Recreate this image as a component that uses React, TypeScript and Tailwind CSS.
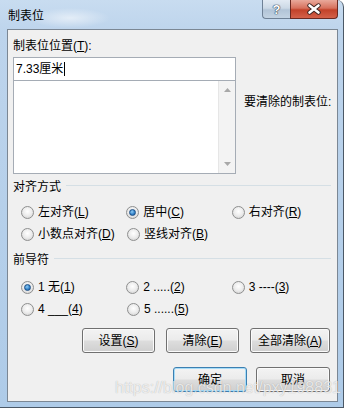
import React from "react";

const Radio = ({ checked }: { checked?: boolean }) => (
    <span className="flex h-[13px] w-[13px] shrink-0 items-center justify-center rounded-full border border-[#8e8f8f] bg-[radial-gradient(circle_at_50%_40%,#ffffff_0%,#ececec_50%,#cbcbcb_100%)]">
        {checked && (
            <span className="h-[7px] w-[7px] rounded-full border border-[#1c4f86] bg-[radial-gradient(circle_at_40%_35%,#8ecbf5_0%,#2f7fc6_60%,#1a5596_100%)]" />
        )}
    </span>
);

const Option = ({ label, keyChar, checked }: { label: string; keyChar: string; checked?: boolean }) => (
    <div className="flex h-[22px] w-[106px] items-center gap-[4px]">
        <Radio checked={checked} />
        <span className="whitespace-pre leading-[16px]">
            {label}(<u>{keyChar}</u>)
        </span>
    </div>
);

const Button = ({ label, keyChar, width, primary }: { label: string; keyChar?: string; width: string; primary?: boolean }) => (
    <button
        type="button"
        className={
            "flex h-[25px] items-center justify-center rounded-[3px] border bg-[linear-gradient(180deg,#f3f3f3_0%,#ebebeb_48%,#dddddd_52%,#cfcfcf_100%)] leading-[16px] text-black " +
            width +
            (primary
                ? " border-[#3c7fb1] shadow-[inset_0_0_0_1px_#a6dcf8]"
                : " border-[#707070] shadow-[inset_0_0_0_1px_#fbfbfb]")
        }
    >
        {label}
        {keyChar && (
            <>
                (<u>{keyChar}</u>)
            </>
        )}
    </button>
);

const GroupHeader = ({ title }: { title: string }) => (
    <div className="flex h-[16px] items-center gap-[5px] pl-[5px] pr-[6px]">
        <span className="leading-[16px]">{title}</span>
        <span className="mt-[-3px] h-px flex-1 bg-[#d5dfe5]" />
    </div>
);

export default function App() {
    return (
        <div className="h-[408px] w-[346px] bg-white font-['Liberation_Sans','Noto_Sans_CJK_SC',sans-serif] text-[12px] text-black">
            <div className="relative flex h-[408px] w-[344px] flex-col rounded-tr-[7px] border-r border-b border-[#4b5866] bg-[linear-gradient(180deg,#c8dcf0_0%,#bdd4ec_8%,#aecbe8_100%)]">
                {/* Title bar */}
                <div className="flex h-[29px] items-start justify-between bg-[radial-gradient(ellipse_40px_10px_at_70px_18px,rgba(255,255,255,0.55),rgba(255,255,255,0))] pr-[5px]">
                    <span className="mt-[8px] pl-[8px] leading-[16px]">制表位</span>
                    <div className="flex">
                        <div className="flex h-[19px] w-[28px] items-center justify-center rounded-bl-[4px] border border-t-0 border-r-0 border-[#6f8196] bg-[linear-gradient(180deg,#e2eaf3_0%,#ccd9e6_45%,#b2c4d7_55%,#c3d3e3_100%)] text-[13px] font-bold leading-none text-white [text-shadow:0_0_1px_#2a3a4a,0_0_1px_#2a3a4a,0_0_1px_#2a3a4a]">
                            ?
                        </div>
                        <div className="flex h-[19px] w-[48px] items-center justify-center rounded-br-[4px] border border-t-0 border-[#6b2a22] bg-[linear-gradient(180deg,#e9a99b_0%,#d7715d_45%,#c2422a_55%,#d3614a_100%)]">
                            <svg width="16" height="12" viewBox="0 0 16 12">
                                <path d="M3.5 2.5 L12.5 9.5 M12.5 2.5 L3.5 9.5" stroke="#3b2320" strokeWidth="4.4" strokeLinecap="round" />
                                <path d="M3.5 2.5 L12.5 9.5 M12.5 2.5 L3.5 9.5" stroke="#ffffff" strokeWidth="2.6" strokeLinecap="round" />
                            </svg>
                        </div>
                    </div>
                </div>

                <div className="flex h-[373px] pl-[7px]">
                    {/* Client area */}
                    <div className="flex h-[373px] w-[331px] flex-col border border-[#7b8794] bg-[#f0f0f0] pt-[8px]">
                        <div className="flex">
                            <div className="flex w-[228px] flex-col pl-[5px]">
                                <span className="h-[16px] leading-[16px]">
                                    制表位位置(<u>T</u>):
                                </span>
                                <div className="mt-[3px] flex h-[24px] w-[223px] items-center border border-[#a5acb5] bg-white pl-[2px]">
                                    <span className="leading-[16px]">7.33厘米</span>
                                    <span className="ml-[1px] h-[14px] w-px bg-black" />
                                </div>
                                <div className="flex h-[93px] w-[223px] border border-t-0 border-[#a5acb5] bg-white">
                                    <div className="flex-1" />
                                    <div className="flex w-[17px] flex-col items-center justify-between border-l border-[#e6e6e6] bg-[#f3f3f3] py-[7px]">
                                        <svg width="7" height="4" viewBox="0 0 7 4">
                                            <path d="M0 4 L3.5 0 L7 4 Z" fill="#a8a8a8" />
                                        </svg>
                                        <svg width="7" height="4" viewBox="0 0 7 4">
                                            <path d="M0 0 L7 0 L3.5 4 Z" fill="#a8a8a8" />
                                        </svg>
                                    </div>
                                </div>
                            </div>
                            <div className="pl-[8px] pt-[56px] leading-[16px]">要清除的制表位:</div>
                        </div>

                        <div className="mt-[5px]">
                            <GroupHeader title="对齐方式" />
                        </div>
                        <div className="mt-[6px] flex flex-col pl-[13px]">
                            <div className="flex">
                                <Option label="左对齐" keyChar="L" />
                                <Option label="居中" keyChar="C" checked />
                                <Option label="右对齐" keyChar="R" />
                            </div>
                            <div className="flex">
                                <Option label="小数点对齐" keyChar="D" />
                                <Option label="竖线对齐" keyChar="B" />
                            </div>
                        </div>

                        <div className="mt-[7px]">
                            <GroupHeader title="前导符" />
                        </div>
                        <div className="mt-[8px] flex flex-col pl-[13px]">
                            <div className="flex">
                                <Option label="1 无" keyChar="1" checked />
                                <Option label="2 ....." keyChar="2" />
                                <Option label="3 ----" keyChar="3" />
                            </div>
                            <div className="flex">
                                <Option label="4 ___" keyChar="4" />
                                <Option label="5 ......" keyChar="5" />
                            </div>
                        </div>

                        <div className="mt-[8px] flex justify-end gap-[11px] pr-[7px]">
                            <Button label="设置" keyChar="S" width="w-[73px]" />
                            <Button label="清除" keyChar="E" width="w-[73px]" />
                            <Button label="全部清除" keyChar="A" width="w-[80px]" />
                        </div>
                        <div className="mt-[14px] flex justify-end gap-[9px] pr-[7px]">
                            <Button label="确定" width="w-[74px]" primary />
                            <Button label="取消" width="w-[74px]" />
                        </div>
                    </div>
                </div>

                {/* watermark over the dialog, as in the screenshot */}
                <span className="pointer-events-none absolute left-[115px] top-[376px] font-['Liberation_Sans',sans-serif] text-[16px] text-white/75 [text-shadow:0_0_1px_rgba(0,0,0,0.3)]">
                    https://blog.csdn.net/pxy198831
                </span>
            </div>
        </div>
    );
}
